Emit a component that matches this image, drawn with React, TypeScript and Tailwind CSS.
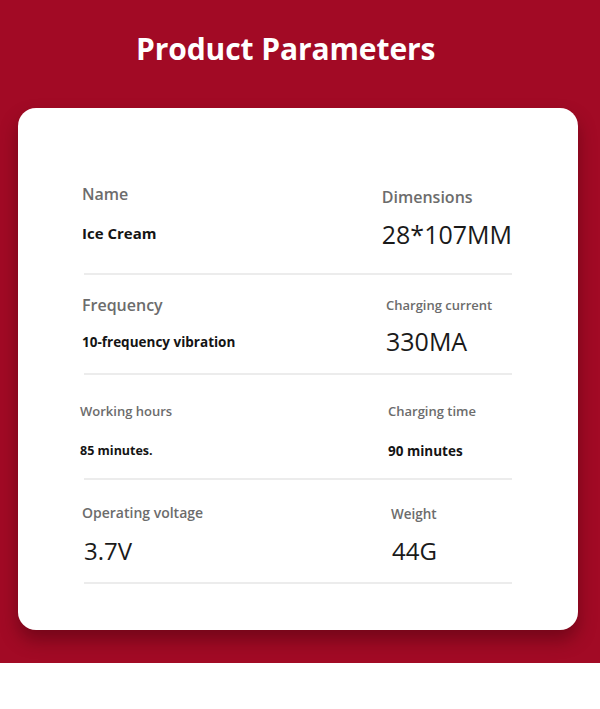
import React from "react";

const font = { fontFamily: '"Open Sans", "Noto Sans", Arial, sans-serif' };

export default function App() {
  return (
    <div className="w-[600px] h-[709px] bg-white" style={font}>
      <div className="h-[663px] bg-[#a20a25] pt-[31px] pb-[33px]">
        <h1 className="pl-[136px] text-white font-bold text-[30px] leading-[36px] tracking-[-0.1px]">
          Product Parameters
        </h1>
        <div className="mt-[41px] ml-[18px] w-[560px] h-[522px] bg-white rounded-[18px] shadow-[0_10px_18px_rgba(60,0,10,0.45)] pl-[64px] pr-[66px]">
          {/* Row 1 */}
          <div className="h-[165px] flex">
            <div className="w-[302px] pt-[76px]">
              <div className="text-[16px] leading-[20px] font-semibold text-[#6c6c6c]">Name</div>
              <div className="mt-[19px] text-[15px] leading-[20px] font-bold text-[#141414]">Ice Cream</div>
            </div>
            <div className="pt-[79px] pl-[2px]">
              <div className="text-[16px] leading-[20px] font-semibold text-[#6c6c6c]">Dimensions</div>
              <div className="mt-[12px] text-[25px] leading-[30px] text-[#1a1a1a]">28*107MM</div>
            </div>
          </div>
          <div className="h-[2px] ml-[2px] bg-[#ececec]" />
          {/* Row 2 */}
          <div className="h-[98px] flex">
            <div className="w-[302px] pt-[20px]">
              <div className="text-[16px] leading-[20px] font-semibold text-[#6c6c6c]">Frequency</div>
              <div className="mt-[18px] text-[13.5px] leading-[18px] font-bold text-[#141414]">10-frequency vibration</div>
            </div>
            <div className="pt-[21px] pl-[2px]">
              <div className="text-[13px] leading-[18px] font-semibold text-[#6c6c6c]">Charging current</div>
              <div className="mt-[12px] text-[25px] leading-[30px] text-[#1a1a1a]">330MA</div>
            </div>
          </div>
          <div className="h-[2px] ml-[2px] bg-[#ececec]" />
          {/* Row 3 */}
          <div className="h-[103px] flex">
            <div className="w-[302px] pt-[27px] -ml-[2px]">
              <div className="text-[13px] leading-[18px] font-semibold text-[#6c6c6c]">Working hours</div>
              <div className="mt-[22px] text-[12.5px] leading-[18px] font-bold text-[#141414]">85 minutes.</div>
            </div>
            <div className="pt-[27px] pl-[6px]">
              <div className="text-[13px] leading-[18px] font-semibold text-[#6c6c6c]">Charging time</div>
              <div className="mt-[22px] text-[13.5px] leading-[18px] font-bold text-[#141414]">90 minutes</div>
            </div>
          </div>
          <div className="h-[2px] ml-[2px] bg-[#ececec]" />
          {/* Row 4 */}
          <div className="h-[102px] flex">
            <div className="w-[302px] pt-[23px]">
              <div className="text-[14px] leading-[20px] font-semibold text-[#6c6c6c]">Operating voltage</div>
              <div className="mt-[13px] pl-[2px] text-[24px] leading-[30px] text-[#1a1a1a]">3.7V</div>
            </div>
            <div className="pt-[24px] pl-[7px]">
              <div className="text-[13.5px] leading-[20px] font-semibold text-[#6c6c6c]">Weight</div>
              <div className="mt-[12px] pl-[1px] text-[24px] leading-[30px] text-[#1a1a1a]">44G</div>
            </div>
          </div>
          <div className="h-[2px] ml-[2px] bg-[#ececec]" />
        </div>
      </div>
    </div>
  );
}
